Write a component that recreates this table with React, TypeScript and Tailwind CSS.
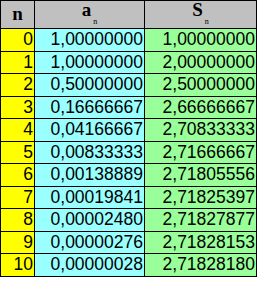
import React from "react";

const rows: [string, string, string][] = [
  ["0", "1,00000000", "1,00000000"],
  ["1", "1,00000000", "2,00000000"],
  ["2", "0,50000000", "2,50000000"],
  ["3", "0,16666667", "2,66666667"],
  ["4", "0,04166667", "2,70833333"],
  ["5", "0,00833333", "2,71666667"],
  ["6", "0,00138889", "2,71805556"],
  ["7", "0,00019841", "2,71825397"],
  ["8", "0,00002480", "2,71827877"],
  ["9", "0,00000276", "2,71828153"],
  ["10", "0,00000028", "2,71828180"],
];

const headFont = { fontFamily: '"Liberation Serif", "DejaVu Serif", serif' };

function Head({ main, sub }: { main: string; sub?: string }) {
  return (
    <div
      className="bg-[#c0c0c0] flex items-center justify-center pb-[3px] font-bold text-[19px] leading-none text-black"
      style={headFont}
    >
      <span>
        {main}
        {sub && <span className="text-[8px] font-normal align-[-8px] ml-[2px]">{sub}</span>}
      </span>
    </div>
  );
}

export default function App() {
  return (
    <div className="w-[259px] h-[282px] bg-white">
      <div
        className="inline-grid bg-black p-px gap-px grid-cols-[33px_109px_111px] grid-rows-[27px_repeat(11,21.5px)]"
        style={{ fontFamily: '"Liberation Sans", Arial, sans-serif' }}
      >
        <Head main="n" />
        <Head main="a" sub="n" />
        <Head main="S" sub="n" />
        {rows.map(([n, a, s]) => (
          <React.Fragment key={n}>
            <div className="bg-[#ffff00] flex items-center justify-end pr-[1px] text-[17.5px] leading-none text-black">{n}</div>
            <div className="bg-[#99ffff] flex items-center justify-end pr-[1px] text-[17.5px] leading-none text-black">{a}</div>
            <div className="bg-[#99ff99] flex items-center justify-end pr-[1px] text-[17.5px] leading-none text-black">{s}</div>
          </React.Fragment>
        ))}
      </div>
    </div>
  );
}
